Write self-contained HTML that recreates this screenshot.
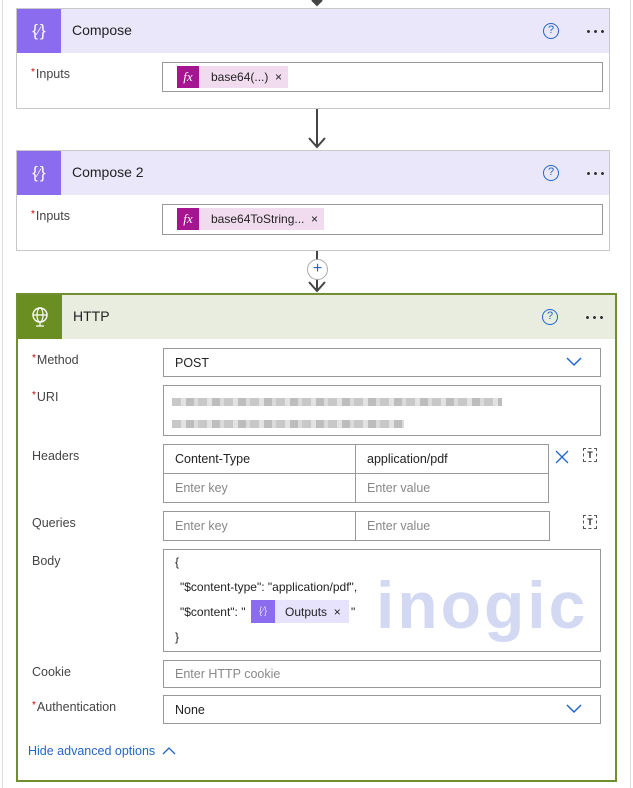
<!DOCTYPE html>
<html><head><meta charset="utf-8"><style>
*{box-sizing:border-box;margin:0;padding:0}
body{width:633px;height:788px;background:#fff;position:relative;overflow:hidden;font-family:"Segoe UI","Liberation Sans",sans-serif;font-size:12.5px;color:#222}
.a{position:absolute}
.card{position:absolute;border:1px solid #c8c8c8;background:#fff}
.hdr{position:absolute;left:0;right:0;top:0;height:44px}
.ico{position:absolute;left:0;top:0;width:44px;height:44px;display:flex;align-items:center;justify-content:center;color:#fff}
.title{position:absolute;left:54px;top:13px;font-size:14px;color:#222}
.help{position:absolute;width:16px;height:16px;border:1.5px solid #2266cc;border-radius:50%;color:#2266cc;font-size:11px;line-height:13px;text-align:center}
.dots{position:absolute;width:20px;height:3px;background:radial-gradient(circle,#333 1.3px,transparent 1.6px) 0 0/7px 3px repeat-x}
.lbl{position:absolute;left:14px;color:#444}
.lbl b{color:#c00;font-weight:normal;font-size:10px;vertical-align:top;margin-right:1px}
.box{position:absolute;border:1px solid #999;background:#fff}
.tok{position:absolute;height:22px;display:flex;align-items:center;background:#f1dcef;font-size:12px;padding-right:6px}
.tok i{width:22px;height:22px;background:#a4158f;color:#fff;font-family:"Liberation Serif",serif;font-size:13px;display:flex;align-items:center;justify-content:center;margin-right:12px}
.ph{color:#888}
.chev{position:absolute;right:18px;top:8px}
.blur{position:absolute;height:8px;background:repeating-linear-gradient(90deg,#c8c8c8 0 9px,#e2e2e2 9px 14px,#bdbdbd 14px 22px,#dadada 22px 26px)}
</style></head><body>
<div class="a" style="left:2px;top:0;width:1px;height:788px;background:#ddd"></div>
<div class="a" style="left:630px;top:0;width:1px;height:788px;background:#ddd"></div>
<svg class="a" style="left:309px;top:0" width="16" height="8"><path d="M3 0 L8 5 L13 0" stroke="#444" stroke-width="2" fill="#444"/></svg>

<div class="card" style="left:16px;top:8px;width:594px;height:101px">
 <div class="hdr" style="background:#ebe7fb"></div>
 <div class="ico" style="background:#8b6cef;font-size:17px">{<span style="font-size:12px">⁄</span>}</div>
 <div class="title" style="left:55px">Compose</div>
 <div class="help" style="left:526px;top:14px">?</div>
 <div class="dots" style="left:568px;top:21px"></div>
 <div class="lbl" style="top:58px"><b>*</b>Inputs</div>
 <div class="box" style="left:145px;top:53px;width:441px;height:30px"></div>
 <div class="tok" style="left:160px;top:57px"><i>fx</i>base64(...)&nbsp;&nbsp;×</div>
</div>
<div class="a" style="left:316px;top:109px;width:2px;height:38px;background:#444"></div>
<svg class="a" style="left:307px;top:136px" width="20" height="14"><path d="M2 2 L10 11 L18 2" stroke="#444" stroke-width="2" fill="none"/></svg>

<div class="card" style="left:16px;top:150px;width:594px;height:101px">
 <div class="hdr" style="background:#ebe7fb"></div>
 <div class="ico" style="background:#8b6cef;font-size:17px">{<span style="font-size:12px">⁄</span>}</div>
 <div class="title" style="left:55px">Compose 2</div>
 <div class="help" style="left:526px;top:14px">?</div>
 <div class="dots" style="left:568px;top:21px"></div>
 <div class="lbl" style="top:58px"><b>*</b>Inputs</div>
 <div class="box" style="left:145px;top:53px;width:441px;height:31px"></div>
 <div class="tok" style="left:160px;top:57px"><i>fx</i>base64ToString...&nbsp;&nbsp;×</div>
</div>
<div class="a" style="left:316px;top:251px;width:2px;height:40px;background:#444"></div>
<div class="a" style="left:307px;top:259px;width:21px;height:21px;border:1.5px solid #aaa;border-radius:50%;background:#fff;color:#2266cc;font-size:16px;line-height:17px;text-align:center">+</div>
<svg class="a" style="left:307px;top:280px" width="20" height="14"><path d="M2 2 L10 11 L18 2" stroke="#444" stroke-width="2" fill="none"/></svg>

<div class="a" style="left:16px;top:293px;width:601px;height:489px;border:2px solid #6f8f31;background:#fff">
 <div class="hdr" style="background:#e8eddf"></div>
 <div class="ico" style="background:#6b8e23">
  <svg width="20" height="22" viewBox="0 0 20 22"><circle cx="10" cy="9" r="7" stroke="#fff" stroke-width="1.4" fill="none"/><ellipse cx="10" cy="9" rx="3" ry="7" stroke="#fff" stroke-width="1.2" fill="none"/><path d="M3 9H17M10 16V20M6 20H14" stroke="#fff" stroke-width="1.2"/></svg>
 </div>
 <div class="title" style="left:55px">HTTP</div>
 <div class="help" style="left:524px;top:14px">?</div>
 <div class="dots" style="left:566px;top:21px"></div>

 <div class="lbl" style="top:58px"><b>*</b>Method</div>
 <div class="box" style="left:145px;top:53px;width:438px;height:29px;padding:7px 11px">POST<svg class="chev" width="16" height="10"><path d="M1 1 L8 8 L15 1" stroke="#2266cc" stroke-width="1.5" fill="none"/></svg></div>

 <div class="lbl" style="top:95px"><b>*</b>URI</div>
 <div class="box" style="left:145px;top:90px;width:438px;height:51px">
  <div class="blur" style="left:8px;top:12px;width:330px"></div>
  <div class="blur" style="left:8px;top:34px;width:232px"></div>
 </div>

 <div class="lbl" style="top:154px">Headers</div>
 <div class="box" style="left:145px;top:149px;width:386px;height:59px">
  <div class="a" style="left:191px;top:0;width:1px;height:57px;background:#999"></div>
  <div class="a" style="left:0;top:28px;width:384px;height:1px;background:#999"></div>
  <div class="a" style="left:11px;top:7px">Content-Type</div>
  <div class="a" style="left:203px;top:7px">application/pdf</div>
  <div class="a ph" style="left:11px;top:36px">Enter key</div>
  <div class="a ph" style="left:203px;top:36px">Enter value</div>
 </div>
 <svg class="a" style="left:537px;top:155px" width="14" height="14"><path d="M1 1L13 13M13 1L1 13" stroke="#2266cc" stroke-width="1.3"/></svg>
 <div class="a" style="left:565px;top:153px;width:14px;height:14px;border:1px dashed #555;font-size:9px;text-align:center;line-height:12px;font-weight:bold">T</div>

 <div class="lbl" style="top:221px">Queries</div>
 <div class="box" style="left:145px;top:216px;width:387px;height:30px">
  <div class="a" style="left:191px;top:0;width:1px;height:28px;background:#999"></div>
  <div class="a ph" style="left:11px;top:7px">Enter key</div>
  <div class="a ph" style="left:203px;top:7px">Enter value</div>
 </div>
 <div class="a" style="left:565px;top:220px;width:14px;height:14px;border:1px dashed #555;font-size:9px;text-align:center;line-height:12px;font-weight:bold">T</div>

 <div class="lbl" style="top:259px">Body</div>
 <div class="box" style="left:145px;top:254px;width:438px;height:103px;font-size:12px;overflow:visible">
  <div class="a" style="left:212px;top:22px;font-size:66px;font-weight:bold;color:#d3d9f3;letter-spacing:3px;font-family:'Liberation Sans',sans-serif;line-height:1">inogic</div>
  <div class="a" style="left:11px;top:5px">{</div>
  <div class="a" style="left:16px;top:30px">"$content-type": "application/pdf",</div>
  <div class="a" style="left:16px;top:55px">"$content": "</div>
  <div class="a" style="left:87px;top:50px;height:23px;background:#e8e3fc;display:flex;align-items:center;padding-right:8px"><span style="width:24px;height:23px;background:#8b6cef;color:#dcd2ff;font-size:10px;display:flex;align-items:center;justify-content:center;margin-right:10px">{⁄}</span>Outputs&nbsp;&nbsp;×</div>
  <div class="a" style="left:187px;top:55px">"</div>
  <div class="a" style="left:11px;top:80px">}</div>
 </div>

 <div class="lbl" style="top:370px">Cookie</div>
 <div class="box ph" style="left:145px;top:365px;width:438px;height:28px;padding:6px 11px">Enter HTTP cookie</div>

 <div class="lbl" style="top:405px"><b>*</b>Authentication</div>
 <div class="box" style="left:145px;top:400px;width:438px;height:29px;padding:7px 11px">None<svg class="chev" width="16" height="10"><path d="M1 1 L8 8 L15 1" stroke="#2266cc" stroke-width="1.5" fill="none"/></svg></div>

 <div class="a" style="left:10px;top:449px;color:#2266cc">Hide advanced options&nbsp;&nbsp;<svg width="14" height="9"><path d="M1 8 L7 2 L13 8" stroke="#2266cc" stroke-width="1.3" fill="none"/></svg></div>
</div>
</body></html>
